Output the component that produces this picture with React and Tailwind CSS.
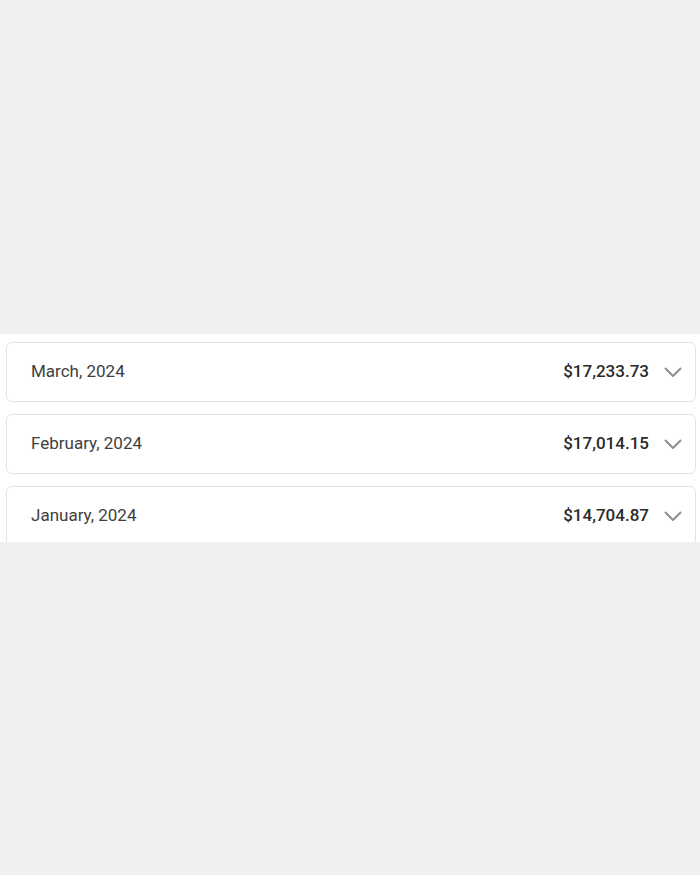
import React from 'react';

const months = [
  { label: 'March, 2024', total: '$17,233.73' },
  { label: 'February, 2024', total: '$17,014.15' },
  { label: 'January, 2024', total: '$14,704.87' },
];

const Chevron = () => (
  <svg viewBox="0 0 24 24" fill="none" stroke="currentColor" strokeWidth="1.8" className="w-6 h-6 text-[#858a93]">
    <path strokeLinecap="round" strokeLinejoin="round" d="M4.5 8.5 12 16l7.5-7.5" />
  </svg>
);

const App = () => {
  return (
    <div className="flex items-center w-full h-screen bg-[#f0f0f0] font-['Roboto',sans-serif]">
      {/* faixa branca com os meses */}
      <div className="w-full h-[208px] overflow-hidden bg-white pl-1.5 pr-1 pt-2">
        <div className="flex flex-col gap-3">
          {months.map((m) => (
            <div
              key={m.label}
              className="flex items-center justify-between h-[60px] shrink-0 pl-6 pr-2.5 bg-white border border-[#e4e4e4] rounded-md"
            >
              <span className="text-[17px] text-[#404040]">{m.label}</span>
              <div className="flex items-center gap-3">
                <span className="text-[17px] font-medium text-[#2a2a2a]">{m.total}</span>
                <Chevron />
              </div>
            </div>
          ))}
        </div>
      </div>
    </div>
  );
};

export default App;
